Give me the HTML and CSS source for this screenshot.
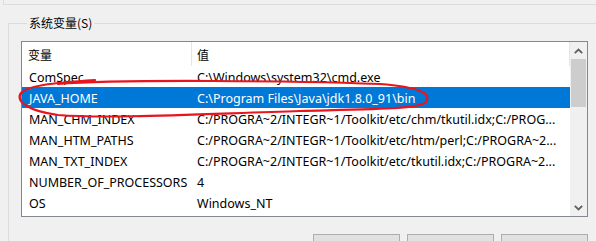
FILE: index.html
```html
<!DOCTYPE html>
<html lang="zh-CN">
<head>
<meta charset="utf-8">
<title>系统变量</title>
<link rel="stylesheet" href="styles.css">
</head>
<body>
<div class="prev-group"></div>
<fieldset class="group">
  <legend class="group-label">系统变量(S)</legend>
  <div class="listview">
    <div class="list-main">
      <div class="list-header">
        <div class="hcell">变量</div>
        <div class="hcell hcell-val">值</div>
      </div>
      <div class="row"><div class="cell">ComSpec</div><div class="cell val">C:\Windows\system32\cmd.exe</div></div>
      <div class="row selected"><div class="cell">JAVA_HOME</div><div class="cell val">C:\Program Files\Java\jdk1.8.0_91\bin</div></div>
      <div class="row"><div class="cell">MAN_CHM_INDEX</div><div class="cell val">C:/PROGRA~2/INTEGR~1/Toolkit/etc/chm/tkutil.idx;C:/PROG...</div></div>
      <div class="row"><div class="cell">MAN_HTM_PATHS</div><div class="cell val">C:/PROGRA~2/INTEGR~1/Toolkit/etc/htm/perl;C:/PROGRA~2...</div></div>
      <div class="row"><div class="cell">MAN_TXT_INDEX</div><div class="cell val">C:/PROGRA~2/INTEGR~1/Toolkit/etc/tkutil.idx;C:/PROGRA~2...</div></div>
      <div class="row"><div class="cell">NUMBER_OF_PROCESSORS</div><div class="cell val">4</div></div>
      <div class="row"><div class="cell">OS</div><div class="cell val">Windows_NT</div></div>
    </div>
    <div class="scrollbar">
      <div class="sb-btn">
        <svg width="9" height="6" viewBox="0 0 9 6"><polyline points="0.8,5.2 4.5,1.5 8.2,5.2" fill="none" stroke="#606060" stroke-width="1.8"/></svg>
      </div>
      <div class="sb-thumb"></div>
      <div class="sb-track"></div>
      <div class="sb-btn">
        <svg width="9" height="6" viewBox="0 0 9 6"><polyline points="0.8,0.8 4.5,4.5 8.2,0.8" fill="none" stroke="#606060" stroke-width="1.8"/></svg>
      </div>
    </div>
  </div>
  <div class="buttons">
    <button class="btn" type="button"></button>
    <button class="btn" type="button"></button>
    <button class="btn" type="button"></button>
  </div>
</fieldset>
<svg class="annotation" width="596" height="241" viewBox="0 0 596 241">
  <path d="M 58 84 C 120 79, 300 81, 380 84 C 418 87, 432 93, 426 102 C 420 109, 380 109, 300 111 C 200 114, 110 119, 58 115 C 28 111, 15 101, 21 93 C 27 86, 50 83, 95 80" fill="none" stroke="#e8141e" stroke-width="2.2" stroke-linecap="round"/>
</svg>
</body>
</html>
```

FILE: styles.css
```css
html, body {
  margin: 0;
  padding: 0;
}
body {
  position: relative;
  width: 596px;
  height: 241px;
  overflow: hidden;
  background: #f0f0f0;
  font-family: "Noto Sans", "Noto Sans CJK SC", sans-serif;
  font-size: 12.5px;
  color: #000;
}
.prev-group {
  margin-left: 3px;
  height: 4px;
  border-left: 1px solid #dcdcdc;
  border-bottom: 1px solid #dcdcdc;
}
.group {
  margin: 10px 0 0 8px;
  padding: 0 0 0 12px;
  border: 1px solid #dcdcdc;
  border-right: 0;
  border-bottom: 0;
  min-width: 0;
}
.group-label {
  margin-left: 6px;
  padding: 0 2px;
  line-height: 16px;
  font-size: 12px;
  font-family: "Noto Sans CJK SC", sans-serif;
}
.listview {
  margin-top: 10px;
  width: 565px;
  height: 174px;
  border: 1px solid #828790;
  background: #fff;
  display: flex;
}
.list-main {
  flex: 1;
  min-width: 0;
  display: flex;
  flex-direction: column;
}
.list-header {
  display: grid;
  grid-template-columns: 170px 1fr;
  height: 24px;
}
.hcell {
  display: flex;
  align-items: center;
  padding: 1px 0 0 6px;
  border-right: 1px solid #e5e5e5;
  font-size: 12px;
  font-family: "Noto Sans CJK SC", sans-serif;
}
.hcell-val {
  padding-left: 5px;
}
.row {
  display: grid;
  grid-template-columns: 170px 1fr;
  height: 21px;
  align-items: center;
}
.row.selected {
  background: #0078d7;
  color: #fff;
}
.cell {
  padding: 1px 0 0 7px;
  white-space: nowrap;
  overflow: hidden;
}
.cell.val {
  padding-left: 5px;
}
.scrollbar {
  width: 17px;
  background: #f0f0f0;
  display: flex;
  flex-direction: column;
}
.sb-btn {
  height: 17px;
  display: flex;
  align-items: center;
  justify-content: center;
}
.sb-thumb {
  height: 48px;
  margin: 0 1px;
  background: #cdcdcd;
}
.sb-track {
  flex: 1;
}
.buttons {
  width: 567px;
  margin-top: 17px;
  display: flex;
  justify-content: flex-end;
  gap: 7px;
}
.btn {
  width: 87px;
  height: 7px;
  margin: 0;
  padding: 0;
  background: #e1e1e1;
  border: 1px solid #adadad;
  border-bottom: 0;
}
.annotation {
  position: absolute;
  left: 0;
  top: 0;
  pointer-events: none;
}
```
